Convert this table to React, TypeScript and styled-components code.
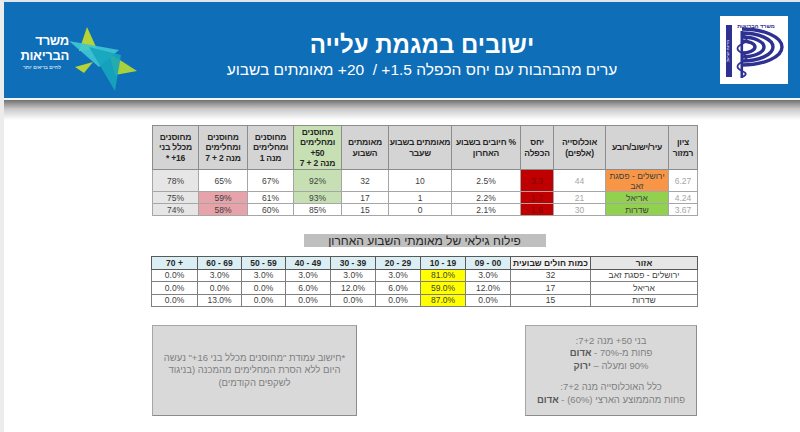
import styled, { createGlobalStyle } from 'styled-components';

type Tone = 'gray' | 'pink' | 'green' | 'red' | 'orange' | 'lime' | 'yellow' | 'cyan' | 'head' | 'light';

const toneColors: Record<Tone, string> = {
  gray: '#e6e6e6',
  pink: '#e6a3a9',
  green: '#c6e0b4',
  red: '#c00000',
  orange: '#f79646',
  lime: '#92d050',
  yellow: '#ffff00',
  cyan: '#daeef3',
  head: '#d4d4d4',
  light: '#f2f2f2',
};

type Cell1 = { v: string; tone?: Tone; muted?: boolean };

// עמודות מימין לשמאל
const mainCols = [29, 63, 52, 33, 69, 63, 47, 48, 46, 49, 46];

const mainHead: { lines: string[]; tone?: Tone }[] = [
  { lines: ['ציון', 'רמזור'] },
  { lines: ['עיר/ישוב/רובע'] },
  { lines: ['אוכלוסייה', '(אלפים)'] },
  { lines: ['יחס', 'הכפלה'] },
  { lines: ['% חיובים בשבוע', 'האחרון'] },
  { lines: ['מאומתים בשבוע', 'שעבר'] },
  { lines: ['מאומתים', 'השבוע'] },
  { lines: ['מחוסנים', 'ומחלימים', '50+', 'מנה 2 + 7'], tone: 'green' },
  { lines: ['מחוסנים', 'ומחלימים', 'מנה 1'] },
  { lines: ['מחוסנים', 'ומחלימים', 'מנה 2 + 7'] },
  { lines: ['מחוסנים', 'מכלל בני', '16+ *'] },
];

const mainRows: { height: number; cells: Cell1[] }[] = [
  {
    height: 22,
    cells: [
      { v: '6.27', muted: true },
      { v: 'ירושלים - פסגת\nזאב', tone: 'orange' },
      { v: '44', muted: true },
      { v: '3.3', tone: 'red' },
      { v: '2.5%' },
      { v: '10' },
      { v: '32' },
      { v: '92%', tone: 'green' },
      { v: '67%' },
      { v: '65%' },
      { v: '78%', tone: 'gray' },
    ],
  },
  {
    height: 12,
    cells: [
      { v: '4.24', muted: true },
      { v: 'אריאל', tone: 'lime' },
      { v: '21', muted: true },
      { v: '1.7', tone: 'red' },
      { v: '2.2%' },
      { v: '1' },
      { v: '17' },
      { v: '93%', tone: 'green' },
      { v: '61%' },
      { v: '59%', tone: 'pink' },
      { v: '75%', tone: 'gray' },
    ],
  },
  {
    height: 12,
    cells: [
      { v: '3.67', muted: true },
      { v: 'שדרות', tone: 'lime' },
      { v: '30', muted: true },
      { v: '1.6', tone: 'red' },
      { v: '2.1%' },
      { v: '0' },
      { v: '15' },
      { v: '85%' },
      { v: '60%' },
      { v: '58%', tone: 'pink' },
      { v: '74%', tone: 'gray' },
    ],
  },
];

const ageCols = [107, 80, 45, 45, 45, 45, 45, 44, 44, 46];
const ageHead = ['09 - 00', '10 - 19', '20 - 29', '30 - 39', '40 - 49', '50 - 59', '60 - 69', '70 +'];
const ageRows = [
  { city: 'ירושלים - פסגת זאב', count: '32', ages: ['3.0%', '81.0%', '3.0%', '3.0%', '3.0%', '3.0%', '3.0%', '0.0%'] },
  { city: 'אריאל', count: '17', ages: ['12.0%', '59.0%', '6.0%', '12.0%', '6.0%', '0.0%', '0.0%', '0.0%'] },
  { city: 'שדרות', count: '15', ages: ['0.0%', '87.0%', '0.0%', '0.0%', '0.0%', '0.0%', '13.0%', '0.0%'] },
];

const App = () => {
  return (
    <>
      <GlobalStyle />
      <Page>
        <Header>
          <BrandMark>
            <BrandText>
              <BrandLine>משרד</BrandLine>
              <BrandLine>הבריאות</BrandLine>
              <Tagline>לחיים בריאים יותר</Tagline>
            </BrandText>
            <StarSvg viewBox="0 0 70 66" width="70" height="66">
              <polygon points="18,2 28,24 10,26" fill="#b6d433" />
              <polygon points="40,28 68,46 46,50" fill="#a9d13c" />
              <polygon points="6,42 24,37 15,48" fill="#b6d433" />
              <polygon points="0,16 50,25 30,42" fill="#3ec6d4" opacity="0.92" />
              <polygon points="20,22 52,30 46,66" fill="#16a5bd" opacity="0.9" />
            </StarSvg>
          </BrandMark>

          <Titles>
            <Title>ישובים במגמת עלייה</Title>
            <Subtitle>ערים מהבהבות עם יחס הכפלה 1.5+ /&nbsp; 20+ מאומתים בשבוע</Subtitle>
          </Titles>

          <Emblem viewBox="0 0 68 68" width="68" height="68">
            <rect width="68" height="68" fill="#fff" />
            <text x="36" y="12" fontSize="5.5" fontWeight="bold" fill="#2e3192" textAnchor="middle" fontFamily="Liberation Sans, sans-serif">
              משרד הבריאות
            </text>
            <rect x="6" y="9" width="6" height="52" fill="#2e3192" />
            <text
              x="9"
              y="35"
              fontSize="4"
              fill="#fff"
              textAnchor="middle"
              transform="rotate(-90 9 35)"
              fontFamily="Liberation Sans, sans-serif"
            >
              מדינת ישראל
            </text>
            {[0, 1, 2, 3].map((k) => {
              const rx = 13 + 9 * k;
              const ry = 6 + 4 * k;
              return (
                <path
                  key={k}
                  d={`M 22 ${31 - ry} A ${rx} ${ry} 0 0 1 22 ${31 + ry}`}
                  fill="none"
                  stroke="#2e3192"
                  strokeWidth="3.4"
                />
              );
            })}
            <rect x="20.5" y="15" width="2.6" height="47" fill="#2e3192" />
            <path
              d="M 22 19 c 6 3 6 6 0 9 c -6 3 -6 6 0 9 c 6 3 6 6 0 9 c -6 3 -6 6 0 9 c 5 2 5 4 0 6"
              fill="none"
              stroke="#2e3192"
              strokeWidth="1.8"
            />
            <circle cx="24" cy="18" r="2" fill="#2e3192" />
          </Emblem>
        </Header>
        <Shadow />

        <Content>
          <MainTable>
            <colgroup>
              {mainCols.map((w, i) => (
                <col key={i} style={{ width: w }} />
              ))}
            </colgroup>
            <thead>
              <tr>
                {mainHead.map((h, i) => (
                  <HeadCell key={i} $tone={h.tone ?? 'head'}>
                    {h.lines.map((l, j) => (
                      <div key={j}>{l}</div>
                    ))}
                  </HeadCell>
                ))}
              </tr>
            </thead>
            <tbody>
              {mainRows.map((r, i) => (
                <tr key={i} style={{ height: r.height }}>
                  {r.cells.map((c, j) => (
                    <DataCell key={j} $tone={c.tone} $muted={c.muted}>
                      {c.v.split('\n').map((l, k) => (
                        <div key={k}>{l}</div>
                      ))}
                    </DataCell>
                  ))}
                </tr>
              ))}
            </tbody>
          </MainTable>

          <SectionBar>פילוח גילאי של מאומתי השבוע האחרון</SectionBar>

          <AgeTable>
            <colgroup>
              {ageCols.map((w, i) => (
                <col key={i} style={{ width: w }} />
              ))}
            </colgroup>
            <thead>
              <tr>
                <AgeHead $tone="gray">אזור</AgeHead>
                <AgeHead $tone="light">כמות חולים שבועית</AgeHead>
                {ageHead.map((a) => (
                  <AgeHead key={a} $tone="cyan">
                    <span dir="ltr">{a}</span>
                  </AgeHead>
                ))}
              </tr>
            </thead>
            <tbody>
              {ageRows.map((r) => (
                <tr key={r.city}>
                  <AgeCell>{r.city}</AgeCell>
                  <AgeCell>{r.count}</AgeCell>
                  {r.ages.map((a, i) => (
                    <AgeCell key={i} $tone={i === 1 ? 'yellow' : undefined}>
                      {a}
                    </AgeCell>
                  ))}
                </tr>
              ))}
            </tbody>
          </AgeTable>

          <Notes>
            <NoteBox $width={205}>
              <NoteLine>*חישוב עמודת "מחוסנים מכלל בני 16+" נעשה</NoteLine>
              <NoteLine>היום ללא הסרת המחלימים מהמכנה (בניגוד</NoteLine>
              <NoteLine>לשקפים הקודמים)</NoteLine>
            </NoteBox>
            <NoteBox $width={172}>
              <NoteLine>בני 50+ מנה 7+2:</NoteLine>
              <NoteLine>
                פחות מ-70% - <Strong>אדום</Strong>
              </NoteLine>
              <NoteLine>
                90% ומעלה – <Strong>ירוק</Strong>
              </NoteLine>
              <NoteGap />
              <NoteLine>כלל האוכלוסייה מנה 7+2:</NoteLine>
              <NoteLine>
                פחות מהממוצע הארצי (60%) - <Strong>אדום</Strong>
              </NoteLine>
            </NoteBox>
          </Notes>
        </Content>
      </Page>
    </>
  );
};

const GlobalStyle = createGlobalStyle`
  html, body {
    margin: 0;
    padding: 0;
    background: #fff;
  }
  body {
    font-family: "Liberation Sans", "DejaVu Sans", Arial, sans-serif;
  }
`;

const Page = styled.div`
  width: 800px;
  height: 432px;
  overflow: hidden;
  box-sizing: border-box;
  border-left: 4px solid #ececec;
  border-top: 2px solid #dfe6ee;
  background: #fff;
  display: flex;
  flex-direction: column;
`;

const Header = styled.header`
  height: 96px;
  flex: none;
  background: #0e6eb8;
  border-bottom: 2px solid #f2f4f6;
  display: flex;
  align-items: center;
  padding: 0 12px 0 11px;
`;

const BrandMark = styled.div`
  display: flex;
  align-items: center;
  width: 125px;
  flex: none;
`;

const BrandText = styled.div`
  direction: rtl;
  text-align: right;
  color: #fff;
  font-weight: bold;
  width: 54px;
  margin-top: 4px;
`;

const BrandLine = styled.div`
  font-size: 13px;
  line-height: 15px;
  letter-spacing: -0.3px;
`;

const Tagline = styled.div`
  font-size: 5px;
  line-height: 7px;
  font-weight: normal;
  text-align: center;
  margin-top: 1px;
`;

const StarSvg = styled.svg`
  flex: none;
  margin-top: 16px;
`;

const Titles = styled.div`
  flex: 1;
  direction: rtl;
  text-align: center;
  color: #fff;
  padding: 10px 16px 0 0;
`;

const Title = styled.h1`
  margin: 0;
  font-size: 24px;
  line-height: 28px;
  font-weight: bold;
`;

const Subtitle = styled.div`
  font-size: 15.5px;
  line-height: 20px;
  margin-top: 1px;
`;

const Emblem = styled.svg`
  flex: none;
`;

const Shadow = styled.div`
  height: 20px;
  flex: none;
  background: linear-gradient(#717171, #c9c9c9 45%, #fff);
`;

const Content = styled.main`
  width: 545px;
  margin: 5px 0 0 148px;
  display: flex;
  flex-direction: column;
`;

const MainTable = styled.table`
  width: 545px;
  border-collapse: collapse;
  table-layout: fixed;
  direction: rtl;
  border: 1px solid #7f7f7f;
  font-size: 8.5px;
  color: #404040;

  thead tr {
    height: 44px;
  }
`;

const HeadCell = styled.th<{ $tone: Tone }>`
  background: ${({ $tone }) => toneColors[$tone]};
  border: 1px solid #8c8c8c;
  padding: 0;
  font-size: 8.5px;
  line-height: 10.5px;
  letter-spacing: -0.2px;
  font-weight: bold;
  color: #262626;
  text-align: center;
  vertical-align: middle;
  white-space: nowrap;
`;

const DataCell = styled.td<{ $tone?: Tone; $muted?: boolean }>`
  background: ${({ $tone }) => ($tone ? toneColors[$tone] : '#fff')};
  color: ${({ $tone, $muted }) => ($tone === 'red' ? '#7a0000' : $muted ? '#a6a6a6' : '#404040')};
  border: 1px solid #a6a6a6;
  padding: 0;
  line-height: 10px;
  text-align: center;
  vertical-align: middle;
  white-space: nowrap;
`;

const SectionBar = styled.div`
  align-self: center;
  width: 242px;
  height: 13px;
  margin: 18px 0 9px;
  background: #bfbfbf;
  direction: rtl;
  text-align: center;
  font-size: 12px;
  line-height: 14px;
  color: #262626;
`;

const AgeTable = styled.table`
  width: 546px;
  margin-left: -1px;
  border-collapse: collapse;
  table-layout: fixed;
  direction: rtl;
  border: 1px solid #595959;
  font-size: 8.5px;
  color: #404040;

  tr {
    height: 12.5px;
  }
`;

const AgeHead = styled.th<{ $tone: Tone }>`
  background: ${({ $tone }) => toneColors[$tone]};
  border: 1px solid #595959;
  padding: 0;
  font-weight: bold;
  line-height: 10px;
  color: #262626;
  text-align: center;
  white-space: nowrap;
`;

const AgeCell = styled.td<{ $tone?: Tone }>`
  background: ${({ $tone }) => ($tone ? toneColors[$tone] : '#fff')};
  border: 1px solid #7f7f7f;
  padding: 0;
  line-height: 10px;
  text-align: center;
  white-space: nowrap;
`;

const Notes = styled.div`
  display: flex;
  justify-content: space-between;
  margin-top: 18px;
`;

const NoteBox = styled.div<{ $width: number }>`
  width: ${({ $width }) => $width}px;
  height: 91px;
  box-sizing: border-box;
  background: #d9d9d9;
  border: 1px solid #a6a6a6;
  border-right-color: #8c8c8c;
  border-bottom-color: #8c8c8c;
  display: flex;
  flex-direction: column;
  justify-content: center;
  align-items: center;
  direction: rtl;
  color: #7f7f7f;
  font-size: 9.5px;
  line-height: 12.5px;
`;

const NoteLine = styled.div`
  white-space: nowrap;
  text-align: center;
`;

const NoteGap = styled.div`
  height: 9px;
`;

const Strong = styled.b`
  color: #595959;
`;

export default App;
